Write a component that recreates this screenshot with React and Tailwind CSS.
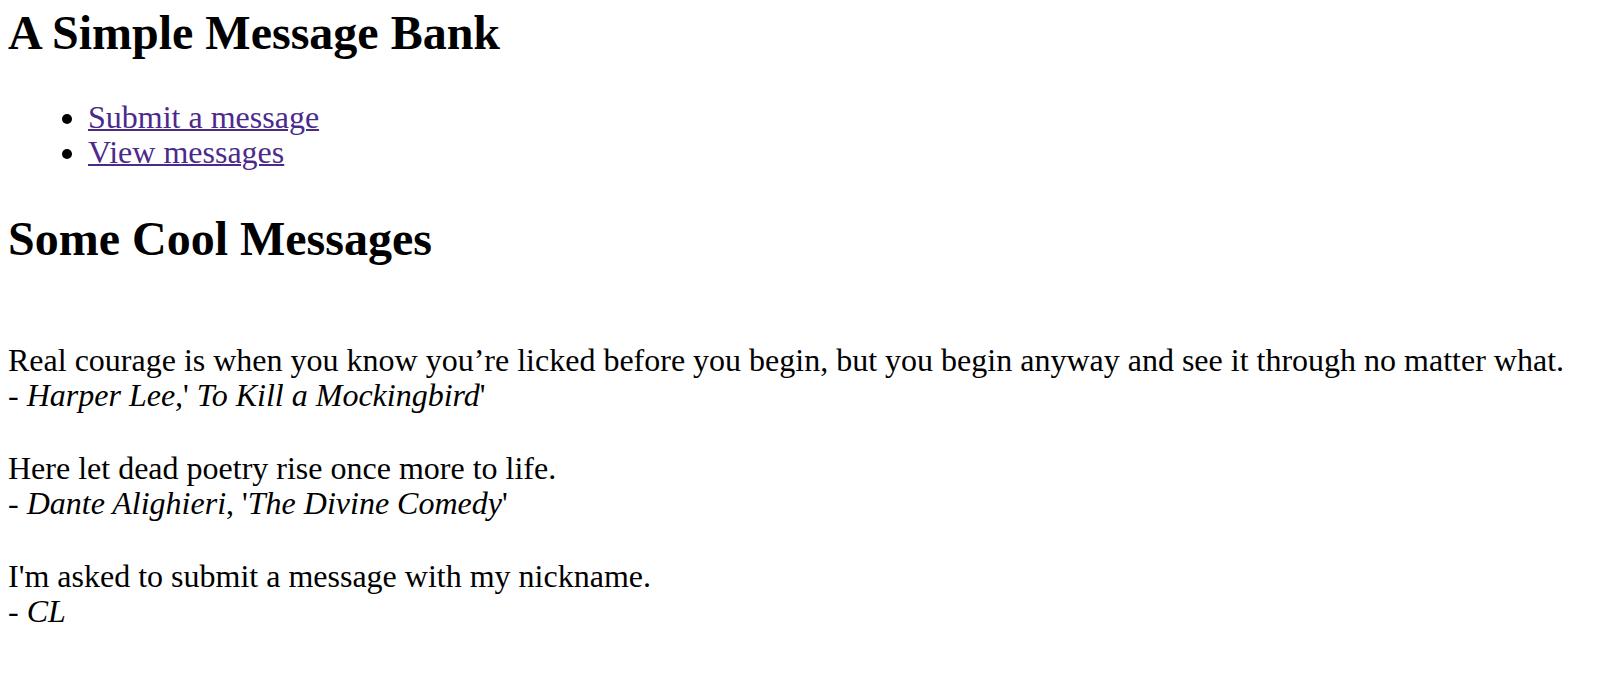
export default function App() {
  const messages = [
    {
      text: "Real courage is when you know you’re licked before you begin, but you begin anyway and see it through no matter what.",
      by: (
        <>
          - <em>Harper Lee,</em>' <em>To Kill a Mockingbird</em>'
        </>
      ),
    },
    {
      text: "Here let dead poetry rise once more to life.",
      by: (
        <>
          - <em>Dante Alighieri</em>, '<em>The Divine Comedy</em>'
        </>
      ),
    },
    {
      text: "I'm asked to submit a message with my nickname.",
      by: (
        <>
          - <em>CL</em>
        </>
      ),
    },
  ];

  return (
    <div className="min-h-screen bg-white text-black font-['Liberation_Serif','Times_New_Roman',serif] px-[8px] pt-[5px]">
      <h1 className="text-[48px] leading-[55px] font-bold">A Simple Message Bank</h1>

      <ul className="list-disc pl-20 mt-[40px] text-[32px] leading-[35px]">
        <li>
          <a href="#" className="text-[#4b2a8c] underline decoration-[2px]">Submit a message</a>
        </li>
        <li>
          <a href="#" className="text-[#4b2a8c] underline decoration-[2px]">View messages</a>
        </li>
      </ul>

      <h2 className="mt-[41px] text-[48px] leading-[55px] font-bold">Some Cool Messages</h2>

      <div className="mt-[77px] flex flex-col gap-[38px] text-[32px] leading-[35px]">
        {messages.map((m, i) => (
          <div key={i}>
            <div>{m.text}</div>
            <div>{m.by}</div>
          </div>
        ))}
      </div>
    </div>
  );
}
